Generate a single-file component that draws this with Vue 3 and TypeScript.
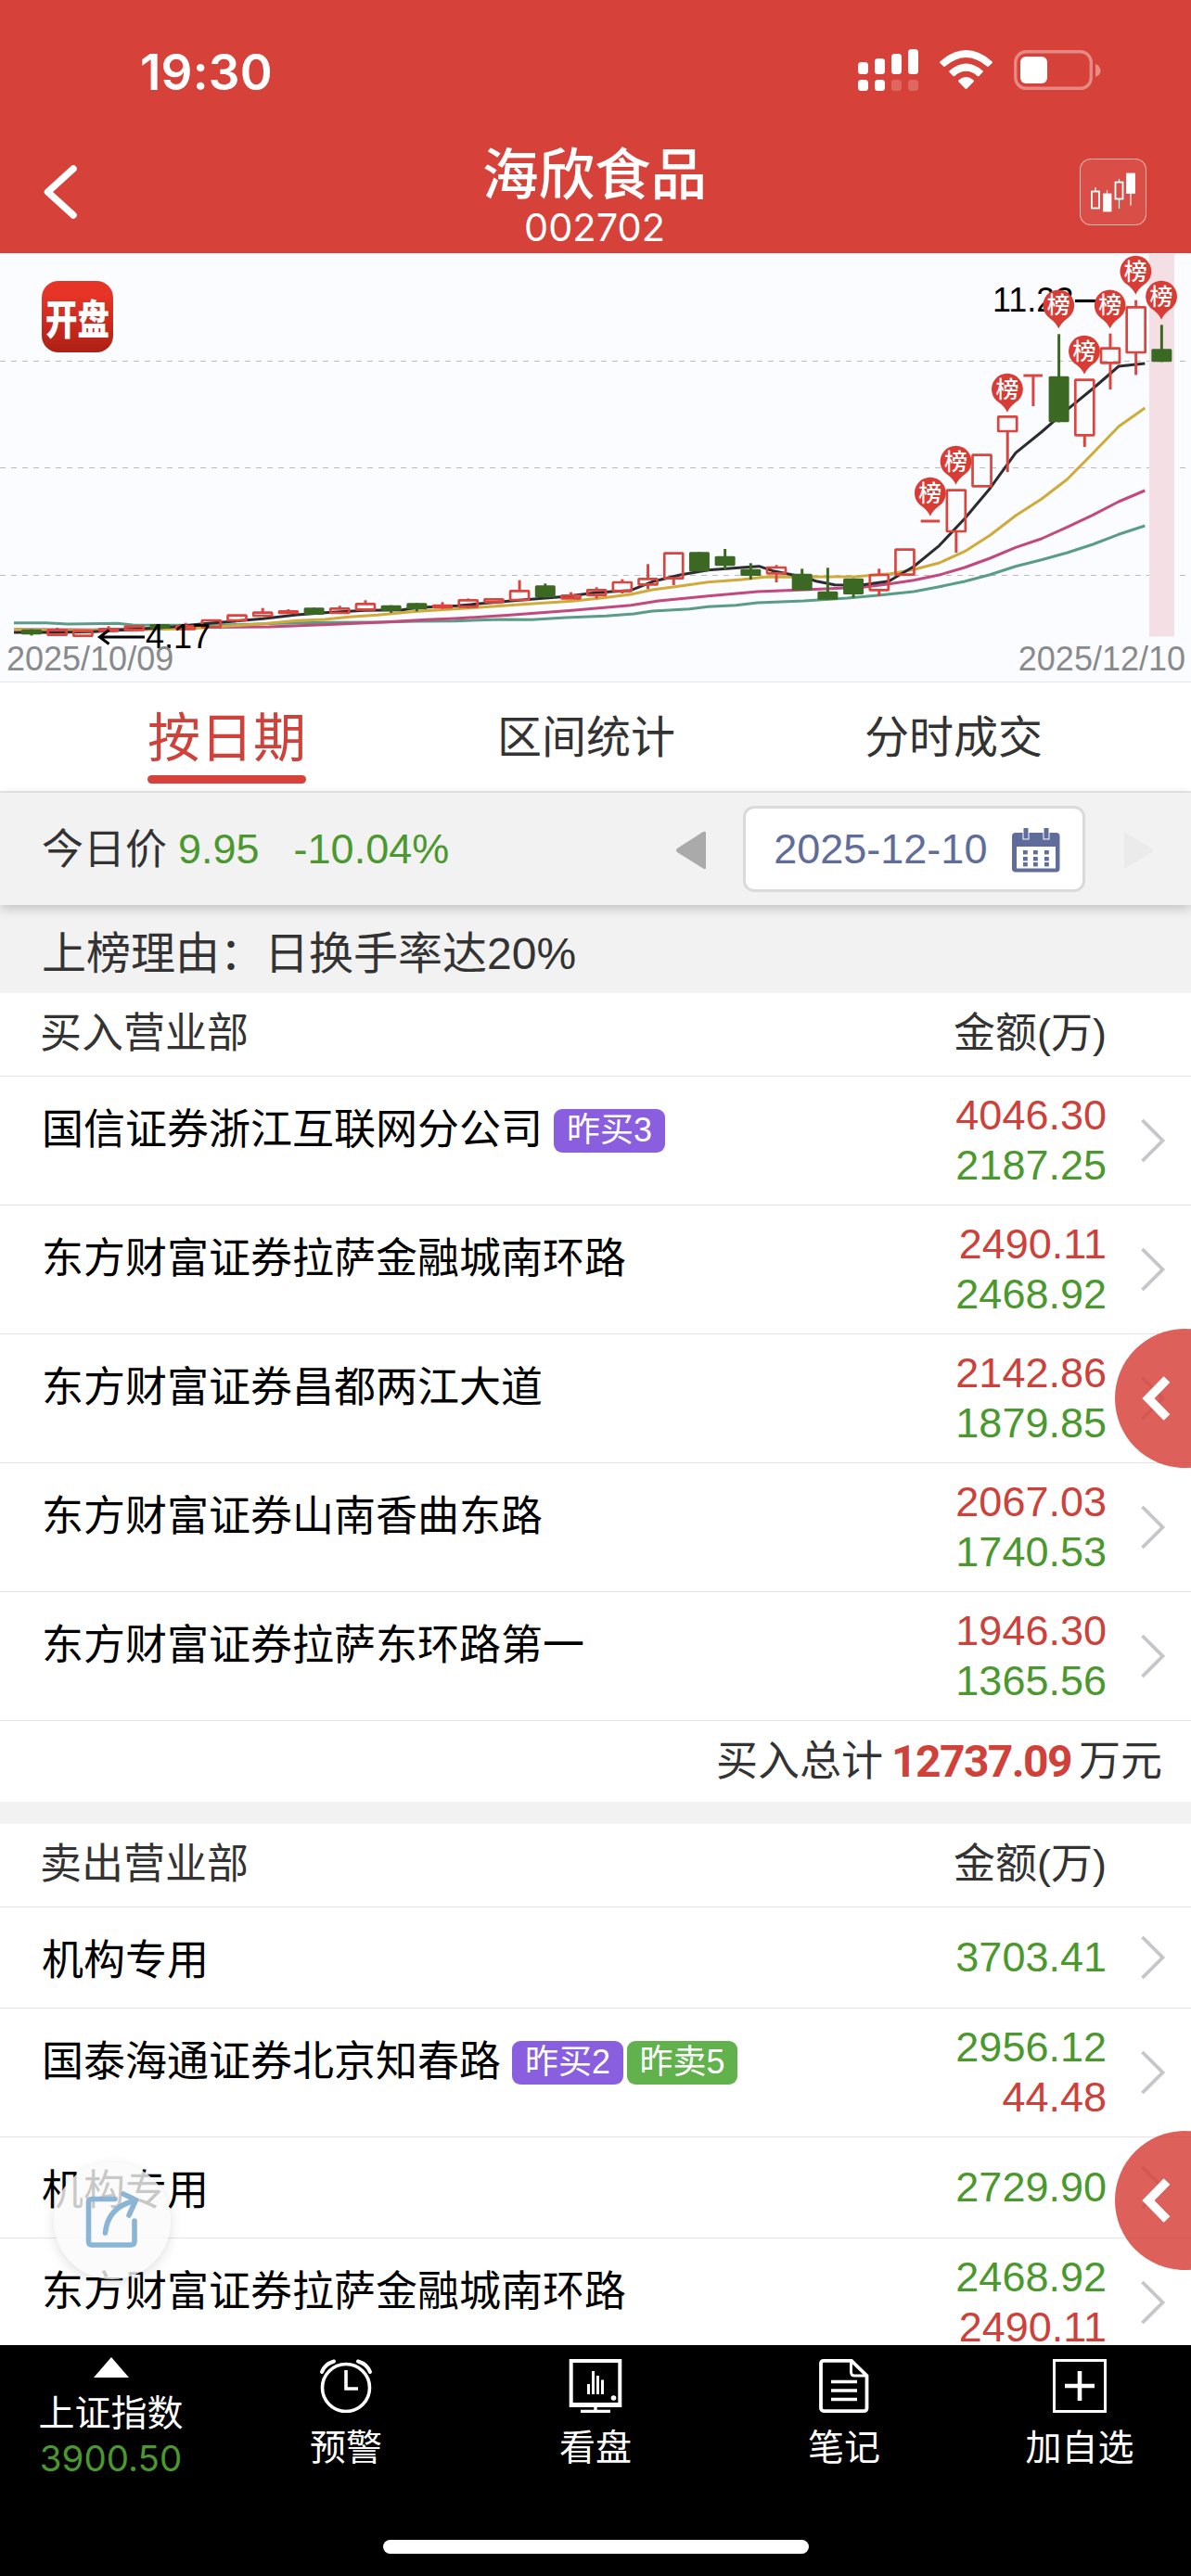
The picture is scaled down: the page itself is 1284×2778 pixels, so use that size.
<script setup lang="ts">
type Tone = 'up' | 'down'
interface Badge { text: string; kind: 'buy' | 'sell' }
interface Amount { value: string; tone: Tone }
interface Seat { name: string; amounts: Amount[]; badges?: Badge[] }

const pair = (a: string, ta: Tone, b: string, tb: Tone): Amount[] => [
  { value: a, tone: ta },
  { value: b, tone: tb },
]

const buyers: Seat[] = [
  { name: '国信证券浙江互联网分公司', amounts: pair('4046.30', 'up', '2187.25', 'down'), badges: [{ text: '昨买3', kind: 'buy' }] },
  { name: '东方财富证券拉萨金融城南环路', amounts: pair('2490.11', 'up', '2468.92', 'down') },
  { name: '东方财富证券昌都两江大道', amounts: pair('2142.86', 'up', '1879.85', 'down') },
  { name: '东方财富证券山南香曲东路', amounts: pair('2067.03', 'up', '1740.53', 'down') },
  { name: '东方财富证券拉萨东环路第一', amounts: pair('1946.30', 'up', '1365.56', 'down') },
]

const sellers: Seat[] = [
  { name: '机构专用', amounts: [{ value: '3703.41', tone: 'down' }] },
  {
    name: '国泰海通证券北京知春路',
    amounts: pair('2956.12', 'down', '44.48', 'up'),
    badges: [{ text: '昨买2', kind: 'buy' }, { text: '昨卖5', kind: 'sell' }],
  },
  { name: '机构专用', amounts: [{ value: '2729.90', tone: 'down' }] },
  { name: '东方财富证券拉萨金融城南环路', amounts: pair('2468.92', 'down', '2490.11', 'up') },
]

// Each candle: direction, body top, body bottom, high, low (chart units, 3 per pixel)
type Raw = [Tone, number, number, number, number]
const raw: Raw[] = [
  ['down', 1226, 1243, 1226, 1246], ['up', 1228, 1244, 1221, 1244], ['up', 1232, 1247, 1232, 1247],
  ['up', 1225, 1231, 1216, 1231], ['up', 1217, 1228, 1217, 1228], ['down', 1209, 1224, 1209, 1224],
  ['up', 1216, 1225, 1205, 1225], ['up', 1197, 1219, 1197, 1219], ['up', 1181, 1197, 1181, 1202],
  ['up', 1172, 1182, 1157, 1182], ['up', 1168, 1173, 1161, 1173], ['down', 1156, 1179, 1156, 1179],
  ['up', 1159, 1173, 1150, 1173], ['up', 1144, 1162, 1132, 1162], ['down', 1148, 1166, 1148, 1173],
  ['down', 1141, 1162, 1141, 1168], ['up', 1149, 1155, 1138, 1160], ['up', 1132, 1153, 1126, 1158],
  ['up', 1129, 1138, 1129, 1138], ['up', 1102, 1131, 1067, 1131], ['down', 1084, 1123, 1078, 1123],
  ['up', 1117, 1126, 1106, 1126], ['up', 1099, 1115, 1090, 1126], ['up', 1074, 1102, 1064, 1110],
  ['up', 1063, 1081, 1015, 1096], ['up', 980, 1061, 980, 1083], ['down', 976, 1039, 976, 1039],
  ['down', 989, 1021, 966, 1033], ['down', 1031, 1053, 1012, 1065], ['up', 1026, 1045, 1018, 1074],
  ['down', 1046, 1100, 1030, 1100], ['down', 1103, 1130, 1027, 1130], ['down', 1061, 1113, 1061, 1124],
  ['up', 1050, 1099, 1030, 1119], ['up', 968, 1049, 968, 1049], ['up', 876, 876, 876, 876],
  ['up', 776, 909, 776, 978], ['up', 662, 763, 662, 763], ['up', 538, 585, 538, 717],
  ['up', 405, 405, 405, 504], ['down', 407, 556, 271, 556], ['up', 419, 598, 419, 636],
  ['up', 317, 364, 269, 450], ['up', 184, 330, 161, 403], ['down', 319, 361, 241, 361],
]
const toY = (v: number): number => v / 3 - 3
const candles = raw.map(([tone, top, bottom, high, low], i) => ({
  tone,
  x: 34 + i * 27.69,
  top: toY(top),
  bottom: toY(bottom),
  high: toY(high),
  low: toY(low),
}))

const line = (pts: number[][]): string => pts.map(([x, y]) => `${(x / 3).toFixed(1)},${toY(y).toFixed(1)}`).join(' ')
const averages = [
  {
    color: '#5a9c86',
    points: line([[45, 1205], [150, 1205], [220, 1209], [380, 1207], [430, 1212], [700, 1213], [900, 1207], [1050, 1204], [1230, 1203], [1350, 1200], [1470, 1199], [1620, 1194], [1720, 1195], [1830, 1188], [1960, 1183], [2050, 1176], [2110, 1167], [2230, 1160], [2290, 1153], [2380, 1148], [2450, 1140], [2600, 1134], [2740, 1125], [2840, 1116], [2955, 1104], [3038, 1088], [3120, 1071], [3202, 1049], [3285, 1022], [3368, 1001], [3452, 978], [3535, 951], [3618, 919], [3703, 891]]),
  },
  {
    color: '#c2497d',
    points: line([[45, 1226], [300, 1228], [600, 1220], [870, 1218], [1100, 1209], [1250, 1202], [1380, 1195], [1470, 1191], [1650, 1180], [1850, 1165], [2040, 1148], [2130, 1134], [2290, 1118], [2450, 1104], [2600, 1098], [2790, 1090], [2870, 1080], [2955, 1067], [3038, 1050], [3120, 1026], [3202, 996], [3285, 961], [3368, 933], [3452, 895], [3535, 856], [3618, 813], [3703, 777]]),
  },
  {
    color: '#d0ab3a',
    points: line([[45, 1226], [200, 1231], [430, 1228], [600, 1224], [700, 1218], [850, 1208], [960, 1198], [1050, 1194], [1130, 1186], [1220, 1180], [1350, 1168], [1550, 1155], [1690, 1145], [1850, 1135], [1950, 1124], [2040, 1113], [2110, 1098], [2200, 1086], [2290, 1073], [2400, 1065], [2480, 1056], [2600, 1057], [2770, 1055], [2880, 1046], [2955, 1033], [3038, 1011], [3120, 974], [3202, 922], [3285, 858], [3368, 805], [3452, 740], [3535, 656], [3618, 570], [3703, 510]]),
  },
  {
    color: '#2c2c30',
    points: line([[45, 1236], [180, 1236], [300, 1234], [430, 1226], [560, 1218], [680, 1206], [730, 1202], [850, 1192], [960, 1179], [1050, 1172], [1180, 1165], [1300, 1163], [1350, 1156], [1480, 1150], [1550, 1143], [1680, 1132], [1830, 1120], [1930, 1107], [2040, 1100], [2110, 1072], [2200, 1050], [2290, 1034], [2390, 1027], [2455, 1022], [2500, 1037], [2595, 1056], [2640, 1070], [2700, 1082], [2785, 1083], [2875, 1070], [2955, 1023], [3038, 955], [3120, 868], [3202, 770], [3285, 655], [3368, 588], [3452, 515], [3535, 447], [3618, 375], [3703, 366]]),
  },
]

const pins = [[35, 785], [36, 683], [38, 449], [40, 178], [41, 326], [42, 178], [43, 68], [44, 149]].map(([i, y]) => ({
  x: candles[i].x - 0.3,
  y: toY(y),
}))

const gridLines = [116.5, 231.5, 347.5]
const calendarRows = [26, 33, 39]
const calendarCols = [14, 25, 37]
</script>

<template>
  <div class="screen">
    <header class="header">
      <div class="status">
        <span class="time">19:30</span>
        <svg class="status-icons" width="264" height="48" viewBox="0 0 264 48">
          <g fill="#fff">
            <rect x="0" y="16" width="11" height="13" rx="3.5" />
            <rect x="18" y="12" width="11" height="17" rx="3.5" />
            <rect x="36" y="7" width="11" height="22" rx="3.5" />
            <rect x="54" y="2" width="11" height="27" rx="3.5" />
            <rect x="0" y="35" width="11" height="12" rx="3.5" />
            <rect x="18" y="35" width="11" height="12" rx="3.5" />
            <rect x="36" y="35" width="11" height="12" rx="3.5" opacity=".2" />
            <rect x="54" y="35" width="11" height="12" rx="3.5" opacity=".2" />
            <path d="M88.6 15.2 Q116.5 -9 144.4 15.2 Q145.4 16.2 144.4 17.2 L140.8 20.6 Q140 21.3 139 20.5 Q116.500 1.500 94 20.500 Q93 21.300 92.200 20.600 L88.600 17.200 Q87.600 16.200 88.600 15.200 Z" />
            <path d="M98.600 25.200 Q116.500 9.800 134.400 25.200 Q135.300 26.100 134.400 27 L130.400 31 Q129.600 31.700 128.700 30.900 Q116.500 20.700 104.300 30.900 Q103.400 31.700 102.600 31 L98.600 27 Q97.700 26.100 98.600 25.200 Z" />
            <path d="M108.600 35.200 Q116.500 29 124.400 35.200 Q125.500 36.200 124.500 37.200 L117.500 44.400 Q116.500 45.300 115.500 44.400 L108.500 37.200 Q107.500 36.200 108.600 35.200 Z" />
            <rect x="175" y="10" width="29" height="29" rx="6" />
            <path d="M256 18 Q261.500 20 261.500 25.500 Q261.500 30 256 32 Z" opacity=".4" />
          </g>
          <rect x="169.800" y="4.800" width="81.500" height="39.500" rx="11.500" fill="none" stroke="#fff" stroke-opacity=".38" stroke-width="3.400" />
        </svg>
      </div>
      <div class="nav">
        <svg class="back" width="44" height="64" viewBox="0 0 44 64">
          <path d="M37 8 L9.500 33 L37 58" fill="none" stroke="#fff" stroke-width="7.500" stroke-linecap="round" stroke-linejoin="round" />
        </svg>
        <div class="titles">
          <h1>海欣食品</h1>
          <p>002702</p>
        </div>
        <div class="kline">
          <svg width="70" height="70" viewBox="0 0 70 70" stroke="#fff" stroke-width="1.800" fill="none">
            <path d="M16 30 V34 M28.500 33 V37 M41.500 21 V24 M41.500 43 V53 M54 37 V49.500" stroke-width="1.200" />
            <rect x="12" y="34.500" width="8" height="18" />
            <rect x="25" y="37.500" width="7.500" height="18" fill="#fff" />
            <rect x="37.500" y="24.500" width="8" height="18" />
            <rect x="50" y="15.500" width="8" height="20.500" fill="#fff" />
          </svg>
        </div>
      </div>
    </header>

    <section class="chart">
      <svg width="1284" height="462" viewBox="0 0 1284 462">
        <line v-for="g in gridLines" :key="g" x1="0" x2="1278" :y1="g" :y2="g" stroke="#b9bcc4" stroke-width="1" stroke-dasharray="6 6" />
        <rect x="1239" y="1" width="27" height="412.500" fill="#f4dfe4" />
        <polyline v-for="a in averages" :key="a.color" :points="a.points" fill="none" :stroke="a.color" stroke-width="3" stroke-linejoin="round" />
        <g v-for="(c, i) in candles" :key="i">
          <template v-if="c.tone === 'down'">
            <line :x1="c.x" :x2="c.x" :y1="c.high" :y2="c.low" stroke="#3b6822" stroke-width="3" />
            <rect :x="c.x - 11" :y="c.top" width="22" :height="c.bottom - c.top" rx="1.500" fill="#3b6822" />
          </template>
          <template v-else>
            <line :x1="c.x" :x2="c.x" :y1="c.high" :y2="c.top" stroke="#dc453e" stroke-width="3" />
            <line :x1="c.x" :x2="c.x" :y1="c.bottom" :y2="c.low" stroke="#dc453e" stroke-width="3" />
            <line v-if="c.top === c.bottom" :x1="c.x - 10.500" :x2="c.x + 10" :y1="c.top" :y2="c.top" stroke="#dc453e" stroke-width="3" />
            <rect v-else :x="c.x - 10" :y="c.top" width="20" :height="c.bottom - c.top" rx=".5" fill="none" stroke="#dc453e" stroke-width="2.700" />
          </template>
        </g>
        <g class="mark">
          <text x="157" y="426">4.17</text>
          <path d="M107 414 H156 M117.500 406.500 L107.500 414 L117.500 421.500" fill="none" stroke="#000" stroke-width="3" />
          <text x="1070" y="63">11.23</text>
          <path d="M1159 51.500 H1190" stroke="#000" stroke-width="3.200" />
        </g>
        <g v-for="(p, i) in pins" :key="'p' + i" :transform="`translate(${p.x} ${p.y})`">
          <path d="M0 25 Q-3 18.500 -9 14.300 A16.900 16.900 0 1 1 9 14.300 Q3 18.500 0 25 Z" fill="#d93c35" />
          <text class="pin" x="0" y="9" text-anchor="middle">榜</text>
        </g>
        <g class="dates">
          <text x="7" y="449.500">2025/10/09</text>
          <text x="1278" y="449.500" text-anchor="end">2025/12/10</text>
        </g>
      </svg>
      <div class="logo"><span>开盘</span></div>
    </section>

    <nav class="tabs">
      <div class="tab active"><span>按日期</span></div>
      <div class="tab second"><span>区间统计</span></div>
      <div class="tab third"><span>分时成交</span></div>
    </nav>

    <section class="price">
      <span class="label">今日价</span>
      <span class="quote">9.95</span>
      <span class="change">-10.04%</span>
      <svg class="prev" width="34" height="42" viewBox="0 0 34 42">
        <path d="M33 2 V40 Q33 42 30 40.500 L2 23 Q0 21 2 19 L30 1 Q33 0 33 2 Z" fill="#aaa" />
      </svg>
      <div class="date-box">
        <span>2025-12-10</span>
        <svg class="calendar" width="52" height="48" viewBox="0 0 52 48">
          <rect x="0" y="5" width="51.500" height="42.500" rx="4" fill="#606c9a" />
          <rect x="5" y="20" width="42" height="23.500" fill="#fff" />
          <g fill="#606c9a" stroke="#fff" stroke-width="1">
            <rect x="12" y="-1" width="6" height="13" />
            <rect x="34" y="-1" width="6" height="13" />
          </g>
          <template v-for="r in calendarRows" :key="r">
            <rect v-for="c in calendarCols" :key="c" :x="c - 2" :y="r - 2" width="4.800" height="4.400" fill="#606c9a" />
          </template>
        </svg>
      </div>
      <svg class="next" width="34" height="42" viewBox="0 0 34 42">
        <path d="M1 1 L31 19 Q33 21 31 23 L1 41 Z" fill="#ebebeb" />
      </svg>
    </section>

    <section class="reason">上榜理由：日换手率达20%</section>

    <section class="list">
      <div class="list-head"><span>买入营业部</span><span>金额(万)</span></div>
      <div v-for="(s, i) in buyers" :key="'b' + i" class="row">
        <div class="name">
          <span>{{ s.name }}</span>
          <em v-for="b in s.badges" :key="b.text" :class="b.kind">{{ b.text }}</em>
        </div>
        <div class="amounts"><span v-for="a in s.amounts" :key="a.value" :class="a.tone">{{ a.value }}</span></div>
        <svg class="chevron" width="28" height="48" viewBox="0 0 28 48">
          <path d="M2.500 2 L24.500 24 L2.500 46" fill="none" stroke="#c6c6ca" stroke-width="3.800" />
        </svg>
      </div>
      <div class="total">买入总计<b>12737.09</b>万元</div>
    </section>

    <section class="list sell-list">
      <div class="list-head"><span>卖出营业部</span><span>金额(万)</span></div>
      <div v-for="(s, i) in sellers" :key="'s' + i" class="row" :class="{ single: s.amounts.length === 1 }">
        <div class="name">
          <span>{{ s.name }}</span>
          <em v-for="b in s.badges" :key="b.text" :class="b.kind">{{ b.text }}</em>
        </div>
        <div class="amounts"><span v-for="a in s.amounts" :key="a.value" :class="a.tone">{{ a.value }}</span></div>
        <svg class="chevron" width="28" height="48" viewBox="0 0 28 48">
          <path d="M2.500 2 L24.500 24 L2.500 46" fill="none" stroke="#c6c6ca" stroke-width="3.800" />
        </svg>
      </div>
    </section>

    <footer class="footer">
      <div class="index">
        <svg width="38" height="22" viewBox="0 0 38 22"><path d="M19 0 L38 22 H0 Z" fill="#fff" /></svg>
        <span>上证指数</span>
        <strong>3900.50</strong>
      </div>
      <div class="item alarm">
        <svg width="58" height="58" viewBox="0 0 58 58" fill="none" stroke="#fff" stroke-width="3.600" stroke-linecap="round">
          <circle cx="29" cy="31" r="25.500" />
          <path d="M29 12 V32 H42" stroke-linecap="butt" />
          <path d="M3 14 Q6 5.500 16 2.500 M55 14 Q52 5.500 42 2.500" stroke-width="4" />
        </svg>
        <span>预警</span>
      </div>
      <div class="item monitor">
        <svg width="58" height="58" viewBox="0 0 58 58" fill="none" stroke="#fff" stroke-width="4">
          <rect x="2.700" y="2" width="52.600" height="48" />
          <path d="M1 49.500 H57" stroke-width="5" />
          <path d="M29 51 V56 M13 56.500 H45" stroke-width="3.400" />
          <path d="M21.500 27 V38 M26.500 13 V38 M31.500 18 V38 M36.500 22.500 V38" stroke-width="3" />
          <circle cx="48.500" cy="42" r="2.800" fill="#fff" stroke="none" />
        </svg>
        <span>看盘</span>
      </div>
      <div class="item note">
        <svg width="54" height="58" viewBox="0 0 54 58" fill="none" stroke="#fff" stroke-width="3.800">
          <path d="M5 1.900 H35 L51.500 18 V53 Q51.500 56.100 48 56.100 H6 Q2 56.100 2 53 V5 Q2 1.900 5 1.900 Z" />
          <path d="M34.500 2 V14 Q34.500 18 38.500 18 H51" stroke-width="3" />
          <path d="M13 24.500 H41 M13 34 H41 M13 43.500 H41" stroke-width="3.600" />
        </svg>
        <span>笔记</span>
      </div>
      <div class="item plus">
        <svg width="58" height="58" viewBox="0 0 58 58" fill="none" stroke="#fff" stroke-width="3">
          <rect x="1.500" y="1.500" width="55" height="55" />
          <path d="M29 13 V45 M13 29 H45" stroke-width="4.600" />
        </svg>
        <span>加自选</span>
      </div>
      <i class="home"></i>
    </footer>

    <button v-for="n in 2" :key="n" class="drawer" :class="'drawer-' + n">
      <svg width="34" height="48" viewBox="0 0 34 48">
        <path d="M29 3.500 L9 24 L29 44.500" fill="none" stroke="#fff" stroke-width="9.500" />
      </svg>
    </button>
    <button class="share">
      <svg width="64" height="66" viewBox="0 0 64 66" fill="none" stroke="#8ab5d4" stroke-width="5.600" stroke-linecap="round" stroke-linejoin="round">
        <path d="M33 10.500 H8 Q4.500 10.500 4.500 14 V56 Q4.500 60 8 60 H50 Q54 60 54 56 V34" />
        <path d="M22.500 47 Q25 20 53 12.500 M42 5 L55.500 11.500 L48 28" />
      </svg>
    </button>
  </div>
</template>

<style>
body {
  margin: 0;
  background: #fff;
}
</style>

<style scoped>
.screen {
  position: relative;
  width: 1284px;
  height: 2778px;
  overflow: hidden;
  display: flex;
  flex-direction: column;
  background: #fff;
  color: #333;
  font-family: "Liberation Sans", "Noto Sans CJK SC", sans-serif;
  font-size: 45px;
}
svg {
  display: block;
  flex: none;
}
.header {
  flex: none;
  height: 273px;
  background: #d64139;
  color: #fff;
}
.status {
  height: 141px;
  box-sizing: border-box;
  padding: 51px 95px 0 151px;
  display: flex;
  justify-content: space-between;
  align-items: flex-start;
}
.time {
  font: 600 53px/54px Inter, sans-serif;
  letter-spacing: 0.2px;
}
.nav {
  display: flex;
  justify-content: space-between;
  align-items: flex-start;
  padding: 0 48px 0 42px;
}
.back {
  margin-top: 33px;
}
.titles {
  text-align: center;
  padding: 9px 0 0 32px;
}
h1 {
  margin: 0;
  font: 500 60.500px/68px "Noto Sans CJK SC", sans-serif;
}
.titles p {
  margin: 3px 0 0;
  font: 400 41.500px/48px Inter, sans-serif;
}
.kline {
  margin-top: 30px;
  width: 70px;
  height: 70px;
  border: 1px solid rgba(255, 255, 255, 0.6);
  border-radius: 12px;
  background: rgba(255, 255, 255, 0.08);
}
.chart {
  position: relative;
  flex: none;
  height: 463px;
  background: #fbfcff;
  border-bottom: 1px solid #e6e8ed;
  box-sizing: border-box;
}
.chart text {
  font-family: "Liberation Sans", sans-serif;
  font-size: 36px;
}
.chart .pin {
  font: 500 25px "Noto Sans CJK SC", sans-serif;
  fill: #fff;
}
.dates text {
  fill: #888a8c;
}
.logo {
  position: absolute;
  left: 45px;
  top: 30px;
  width: 77px;
  height: 77px;
  border-radius: 18px;
  background: linear-gradient(#e63426 20%, #ad2015);
  color: #fff;
  display: flex;
  align-items: center;
  justify-content: center;
}
.logo span {
  font: 900 34.500px/40px "Noto Sans CJK SC", sans-serif;
  transform: scaleY(1.28);
}
.tabs {
  flex: none;
  height: 119px;
  box-sizing: border-box;
  border-bottom: 2px solid #e9e9ea;
  display: flex;
  padding-left: 159px;
  font-family: "Noto Sans CJK SC", sans-serif;
  font-size: 48px;
  line-height: 110px;
}
.tab.active {
  position: relative;
  width: 171px;
  font-size: 57px;
  color: #cf4139;
}
.tab.active::after {
  content: "";
  position: absolute;
  left: 0;
  right: 0;
  top: 100px;
  height: 9px;
  border-radius: 5px;
  background: #d64139;
}
.second {
  margin-left: 206px;
}
.third {
  margin-left: 204px;
}
.price {
  position: relative;
  z-index: 1;
  flex: none;
  height: 121px;
  background: #f2f2f2;
  box-shadow: 0 4px 12px rgba(0, 0, 0, 0.2);
  display: flex;
  align-items: center;
  padding-left: 45px;
  line-height: 120px;
}
.label {
  position: relative;
  top: 1px;
}
.quote {
  margin-left: 12px;
  color: #4b982f;
}
.change {
  margin-left: 37px;
  color: #4b982f;
}
.prev {
  margin-left: 244px;
  margin-top: 2px;
}
.date-box {
  margin-left: 39px;
  width: 369px;
  height: 93px;
  box-sizing: border-box;
  border: 3px solid #dadada;
  border-radius: 12px;
  background: #fff;
  color: #606c9a;
  display: flex;
  align-items: center;
  justify-content: space-between;
  padding: 0 24px 0 30px;
  line-height: 84px;
}
.calendar {
  margin-top: 2px;
}
.next {
  margin-left: 41px;
  margin-top: 2px;
}
.reason {
  flex: none;
  height: 95px;
  background: #f2f2f2;
  padding-left: 45px;
  font-size: 48px;
  line-height: 105px;
}
.list {
  flex: none;
}
.list-head {
  height: 90px;
  box-sizing: border-box;
  border-bottom: 1px solid #e3e3e5;
  display: flex;
  justify-content: space-between;
  padding: 0 91px 0 45px;
  line-height: 87px;
}
.list-head span:first-child {
  margin-left: -2px;
}
.row {
  height: 139px;
  box-sizing: border-box;
  border-bottom: 1px solid #e3e3e5;
  display: flex;
  align-items: center;
  padding: 0 27px 0 45px;
  color: #000;
}
.row.single {
  height: 109px;
}
.name {
  align-self: flex-start;
  flex: 1;
  display: flex;
  padding-top: 28px;
  line-height: 60px;
}
.name em {
  margin: 7px 0 0 4px;
  width: 120px;
  height: 47px;
  border-radius: 9px;
  font-style: normal;
  font-size: 36px;
  line-height: 45px;
  text-align: center;
  color: #fff;
}
.name span + em {
  margin-left: 12px;
}
.name em + em {
  width: 119px;
}
.buy {
  background: #8a5fdf;
}
.sell {
  background: #61b14c;
}
.amounts {
  display: flex;
  flex-direction: column;
  text-align: right;
  line-height: 54px;
}
.up {
  color: #cc4139;
}
.down {
  color: #4b982f;
}
.chevron {
  margin-left: 36px;
}
.total {
  height: 87px;
  display: flex;
  justify-content: flex-end;
  padding-right: 31px;
  line-height: 88px;
}
.total b {
  margin: 0 8px 0 9px;
  font-family: Roboto, sans-serif;
  font-size: 48px;
  letter-spacing: -1.6px;
  color: #cf4139;
}
.list + .sell-list {
  border-top: 24px solid #f2f2f2;
}
.footer {
  position: absolute;
  z-index: 2;
  left: 0;
  right: 0;
  bottom: 0;
  height: 249px;
  background: #000;
  color: #fff;
  font-size: 39px;
  display: flex;
}
.index,
.item {
  display: flex;
  flex-direction: column;
  align-items: center;
  box-sizing: border-box;
}
.index {
  width: 239px;
  padding-top: 13px;
}
.index span {
  margin-top: 11px;
  line-height: 56px;
}
.index strong {
  font: 400 38.500px/48px Inter, sans-serif;
  margin-top: -4px;
  color: #4b982f;
}
.item {
  padding-top: 15px;
  width: 240px;
}
.item span {
  margin-top: 10px;
  line-height: 56px;
}
.alarm {
  margin-left: 14px;
}
.monitor {
  margin-left: 29px;
}
.note {
  margin-left: 28px;
}
.plus {
  margin-left: 14px;
}
.home {
  position: absolute;
  left: 413px;
  top: 210px;
  width: 459px;
  height: 15px;
  border-radius: 8px;
  background: #fff;
}
.drawer {
  position: absolute;
  right: -68px;
  width: 150px;
  height: 150px;
  padding: 0 0 0 27px;
  border: 0;
  border-radius: 50%;
  background: rgba(214, 65, 57, 0.83);
  display: flex;
  align-items: center;
}
.drawer-1 {
  top: 1433px;
}
.drawer-2 {
  top: 2298px;
}
.share {
  position: absolute;
  left: 58px;
  top: 2332px;
  width: 126px;
  height: 126px;
  padding: 0;
  border: 0;
  border-radius: 50%;
  background: rgba(250, 250, 250, 0.8);
  box-shadow: 0 4px 14px rgba(0, 0, 0, 0.12);
  display: flex;
  align-items: center;
  justify-content: center;
}
.share svg {
  margin: -2px 0 0 4px;
}
</style>
